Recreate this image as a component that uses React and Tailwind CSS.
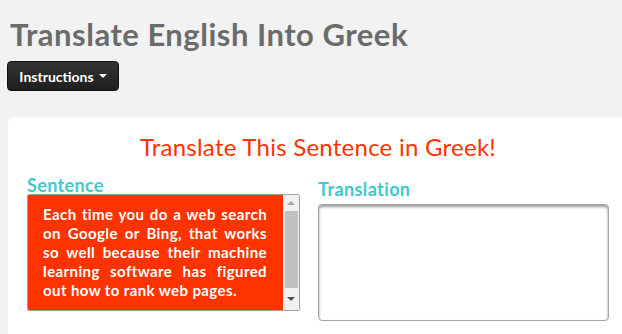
const sentenceLines = [
  'Each time you do a web search',
  'on Google or Bing, that works',
  'so well because their machine',
  'learning software has figured',
  'out how to rank web pages.',
];

export default function App() {
  return (
    <div className="min-h-screen h-[334px] overflow-hidden bg-[#f2f2f2] font-['Lato',sans-serif]">
      <h1 className="pl-[10px] pt-[15px] text-[31px] leading-[38px] font-bold tracking-[0.5px] text-[#6b6b6b]">
        Translate English Into Greek
      </h1>

      <button className="ml-[7px] mt-[8px] flex h-[30px] w-[112px] items-center justify-center gap-[5px] rounded-[4px] border border-[#111] bg-gradient-to-b from-[#333] to-[#1f1f1f] text-[14px] font-bold text-white">
        Instructions
        <span className="h-0 w-0 border-x-[4px] border-t-[4px] border-x-transparent border-t-white"></span>
      </button>

      <div className="ml-[8px] mt-[26px] h-[260px] w-[620px] rounded-[6px] bg-white px-[19px] pt-[15px]">
        <h2 className="text-center text-[24px] leading-[30px] tracking-[0.25px] text-[#ff3300]">
          Translate This Sentence in Greek!
        </h2>

        <div className="mt-[14px] flex gap-[18px]">
          {/* Sentence column */}
          <div className="w-[273px]">
            <div className="text-[18px] leading-[18px] font-bold tracking-[0.35px] text-[#3fcacc]">Sentence</div>
            <div className="flex h-[117px] overflow-hidden rounded-[2px] border border-[#a0a0a0]">
              <div className="flex-1 bg-[#ff3300] pl-[15px] pr-[16px] pt-[10px]">
                <p className="text-[15px] leading-[19px] font-bold tracking-[0.4px] text-white">
                  {sentenceLines.map((line, i) => (
                    <span
                      key={i}
                      className={
                        i < sentenceLines.length - 1
                          ? 'block whitespace-nowrap text-justify [text-align-last:justify]'
                          : 'block whitespace-nowrap'
                      }
                    >
                      {line}
                    </span>
                  ))}
                </p>
              </div>
              {/* scrollbar */}
              <div className="flex w-[16px] flex-col items-center bg-[#f1f1f1]">
                <div className="flex h-[16px] items-center justify-center">
                  <span className="h-0 w-0 border-x-[4px] border-b-[4px] border-x-transparent border-b-[#a3a3a3]"></span>
                </div>
                <div className="h-[77px] w-[13px] bg-[#c1c1c1]"></div>
                <div className="flex flex-1 items-center justify-center">
                  <span className="h-0 w-0 border-x-[4px] border-t-[4px] border-x-transparent border-t-[#505050]"></span>
                </div>
              </div>
            </div>
          </div>

          {/* Translation column */}
          <div className="w-[291px] pt-[4px]">
            <div className="text-[18px] leading-[18px] font-bold tracking-[0.4px] text-[#3fcacc]">Translation</div>
            <textarea className="mt-[6px] block h-[117px] w-full resize-none rounded-[4px] border border-[#a6a6a6] bg-white shadow-[inset_0_2px_3px_rgba(0,0,0,0.4)] outline-none"></textarea>
          </div>
        </div>
      </div>
    </div>
  );
}
